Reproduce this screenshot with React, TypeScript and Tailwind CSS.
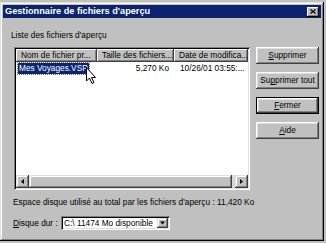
import React from "react";

const columns = [
  { label: "Nom de fichier pr...", width: "w-[81px]" },
  { label: "Taille des fichiers...", width: "w-[77px]" },
  { label: "Date de modifica...", width: "w-[74px]" },
];

function Button({
  children,
  isDefault,
}: {
  children: React.ReactNode;
  isDefault?: boolean;
}) {
  return (
    <div
      className={
        isDefault
          ? "h-[17px] w-[63px] flex items-center justify-center border border-black bg-[#c0c0c0] shadow-[inset_-1px_-1px_#404040,inset_1px_1px_#fff,inset_-2px_-2px_#808080,inset_2px_2px_#dfdfdf]"
          : "h-[17px] w-[63px] flex items-center justify-center bg-[#c0c0c0] shadow-[inset_-1px_-1px_#404040,inset_1px_1px_#fff,inset_-2px_-2px_#808080,inset_2px_2px_#dfdfdf]"
      }
    >
      {children}
    </div>
  );
}

function ArrowButton({ dir }: { dir: "left" | "right" | "down" }) {
  return (
    <div className="h-[13px] w-[13px] shrink-0 flex items-center justify-center bg-[#c0c0c0] shadow-[inset_-1px_-1px_#404040,inset_1px_1px_#dfdfdf,inset_-2px_-2px_#808080,inset_2px_2px_#fff]">
      <svg width="5" height="5" viewBox="0 0 5 5">
        {dir === "left" && <path d="M1 2.5 L4 0 L4 5 Z" fill="#000" />}
        {dir === "right" && <path d="M4 2.5 L1 0 L1 5 Z" fill="#000" />}
        {dir === "down" && <path d="M0 1 L5 1 L2.5 4 Z" fill="#000" />}
      </svg>
    </div>
  );
}

export default function App() {
  return (
    <div className="relative w-[326px] h-[243px] bg-[#c0c0c0] pt-[2px] font-['Liberation_Sans',Arial,sans-serif] text-[8.3px] text-black select-none">
      <div className="w-[324px] h-[239px] p-[3px] bg-[#c0c0c0] shadow-[inset_-1px_-1px_#000,inset_1px_1px_#dfdfdf,inset_-2px_-2px_#808080,inset_2px_2px_#fff]">
        {/* title bar */}
        <div className="h-[13px] bg-[#0a2470] flex items-center justify-between pl-[2px] pr-[2px]">
          <span className="text-white font-bold text-[9.2px] leading-[13px]">
            Gestionnaire de fichiers d'aperçu
          </span>
          <div className="w-[12px] h-[10px] flex items-center justify-center bg-[#c0c0c0] shadow-[inset_-1px_-1px_#000,inset_1px_1px_#fff,inset_-2px_-2px_#808080]">
            <svg width="6" height="5" viewBox="0 0 6 5">
              <path d="M0.5 0.5 L5.5 4.5 M5.5 0.5 L0.5 4.5" stroke="#000" strokeWidth="1.3" />
            </svg>
          </div>
        </div>

        <div className="mt-[12px] ml-[8px] h-[10px] leading-[10px]">Liste des fichiers d'aperçu</div>

        <div className="mt-[7px] ml-[11px] flex">
          {/* list view */}
          <div className="w-[236px] h-[143px] flex flex-col p-[2px] bg-white shadow-[inset_1px_1px_#808080,inset_-1px_-1px_#fff,inset_2px_2px_#000,inset_-2px_-2px_#dfdfdf]">
            <div className="flex h-[13px] shrink-0">
              {columns.map((c) => (
                <div
                  key={c.label}
                  className={`${c.width} h-[13px] pl-[5px] leading-[13px] whitespace-nowrap overflow-hidden bg-[#c0c0c0] shadow-[inset_-1px_-1px_#404040,inset_1px_1px_#fff,inset_-2px_-2px_#808080]`}
                >
                  {c.label}
                </div>
              ))}
              <div className="flex-1 bg-[#c0c0c0] shadow-[inset_-1px_-1px_#404040,inset_1px_1px_#fff]" />
            </div>
            <div className="flex-1 pt-[1px]">
              <div className="flex h-[11px] leading-[11px]">
                <div className="w-[81px] pl-[2px]">
                  <span className="inline-block bg-[#0a2470] text-white px-[1px] outline outline-1 outline-dotted outline-[#6070a0]">
                    Mes Voyages.VSP
                  </span>
                </div>
                <div className="w-[77px] pr-[5px] text-right">5,270 Ko</div>
                <div className="w-[74px] pl-[6px] whitespace-nowrap">10/26/01 03:55:...</div>
              </div>
            </div>
            {/* horizontal scrollbar */}
            <div className="flex h-[13px] shrink-0 bg-[#c0c0c0]">
              <ArrowButton dir="left" />
              <div className="flex-1 flex pr-[3px] bg-[#d8d8d8]">
                <div className="flex-1 bg-[#c0c0c0] shadow-[inset_-1px_-1px_#404040,inset_1px_1px_#dfdfdf,inset_-2px_-2px_#808080,inset_2px_2px_#fff]" />
              </div>
              <ArrowButton dir="right" />
            </div>
          </div>

          {/* buttons */}
          <div className="ml-[6px] flex flex-col gap-[8px]">
            <Button>
              <span>
                <span className="underline">S</span>upprimer
              </span>
            </Button>
            <Button>
              <span>
                Su<span className="underline">p</span>primer tout
              </span>
            </Button>
            <Button isDefault>
              <span>
                <span className="underline">F</span>ermer
              </span>
            </Button>
            <Button>
              <span>
                <span className="underline">A</span>ide
              </span>
            </Button>
          </div>
        </div>

        <div className="mt-[7px] ml-[10px] h-[10px] leading-[10px] whitespace-nowrap">
          Espace disque utilisé au total par les fichiers d'aperçu : 11,420 Ko
        </div>

        <div className="mt-[9px] ml-[10px] flex items-center h-[14px]">
          <div className="w-[48px] whitespace-nowrap">
            <span className="underline">D</span>isque dur :
          </div>
          <div className="w-[109px] h-[14px] flex items-center p-[2px] bg-white shadow-[inset_1px_1px_#808080,inset_-1px_-1px_#fff,inset_2px_2px_#000,inset_-2px_-2px_#dfdfdf]">
            <div className="flex-1 overflow-hidden whitespace-nowrap pl-[1px] leading-[10px]">
              C:\ 11474 Mo disponible
            </div>
            <div className="h-[10px] w-[11px] shrink-0 flex items-center justify-center bg-[#c0c0c0] shadow-[inset_-1px_-1px_#404040,inset_1px_1px_#dfdfdf,inset_-2px_-2px_#808080,inset_2px_2px_#fff]">
              <svg width="5" height="4" viewBox="0 0 5 4">
                <path d="M0 0.5 L5 0.5 L2.5 3.5 Z" fill="#000" />
              </svg>
            </div>
          </div>
        </div>
      </div>

      {/* mouse cursor */}
      <svg
        className="absolute left-[86px] top-[67px]"
        width="11"
        height="18"
        viewBox="0 0 11 18"
      >
        <path
          d="M0.5 0.5 L0.5 14 L3.5 11 L6 16.5 L8 15.5 L5.5 10.5 L9.5 10.5 Z"
          fill="#fff"
          stroke="#000"
          strokeWidth="1"
          strokeLinejoin="miter"
        />
      </svg>
    </div>
  );
}
